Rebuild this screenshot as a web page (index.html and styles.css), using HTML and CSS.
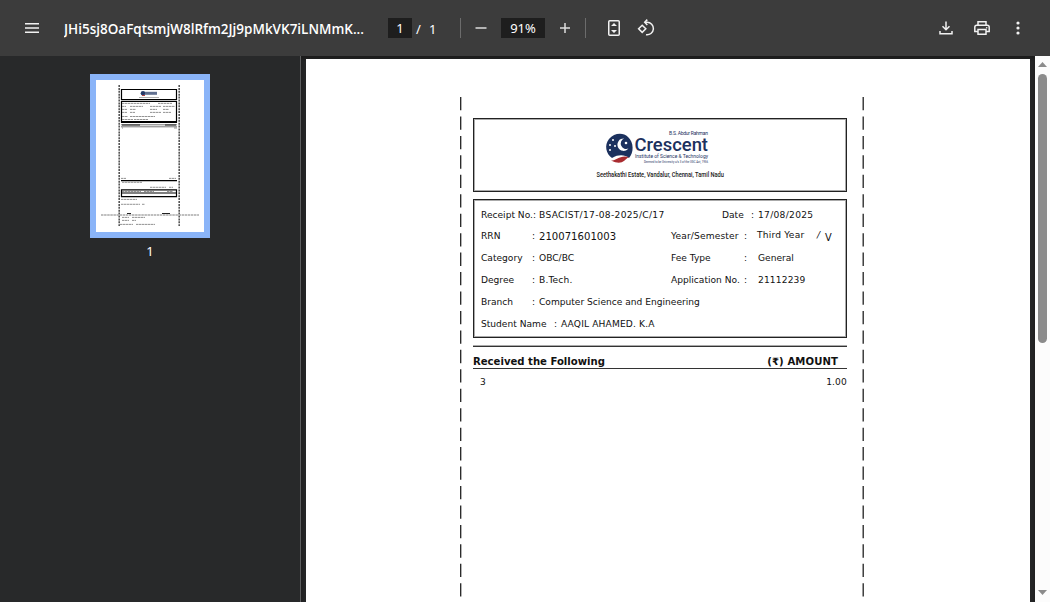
FILE: index.html
```html
<!DOCTYPE html>
<html lang="en">
<head>
<meta charset="utf-8">
<title>Fee receipt</title>
<link rel="stylesheet" href="styles.css">
</head>
<body>
<div class="viewer">
  <header class="toolbar">
    <svg class="menu" width="14" height="10" viewBox="0 0 14 10"><path d="M0 .8h14M0 5h14M0 9.2h14" stroke="#f1f1f1" stroke-width="1.6"/></svg>
    <div class="filename"><svg width="302" height="24"><text x="0" y="18" textLength="300" lengthAdjust="spacingAndGlyphs">JHi5sj8OaFqtsmjW8lRfm2Jj9pMkVK7iLNMmK...</text></svg></div>
    <span class="field page-field">1</span>
    <span class="slash">/</span><span class="total">1</span>
    <i class="divider"></i>
    <svg class="minus" width="12" height="12" viewBox="0 0 12 12"><path d="M.5 6h11" stroke="#ddd" stroke-width="1.5"/></svg>
    <span class="field zoom-field">91%</span>
    <svg class="plus" width="12" height="12" viewBox="0 0 12 12"><path d="M1 6h10M6 1v10" stroke="#ddd" stroke-width="1.5"/></svg>
    <i class="divider second"></i>
    <svg class="fit" width="12" height="16" viewBox="0 0 12 16"><rect x=".75" y=".75" width="10.5" height="14.5" rx="1" fill="none" stroke="#f1f1f1" stroke-width="1.5"/><path d="M3 6l3-3 3 3zM3 10l3 3 3-3z" fill="#f1f1f1"/></svg>
    <svg class="rotate" width="18" height="18" viewBox="0 0 18 18"><g fill="none" stroke="#f1f1f1" stroke-width="1.5"><path d="M5.2 6.2l3.6 3.6-3.6 3.6-3.6-3.6z"/><path d="M8 3.2h2a6.3 6.3 0 1 1-1 12.5"/><path d="M10.3.6L7.7 3.2l2.6 2.7"/></g></svg>
    <div class="actions">
      <svg width="14" height="14" viewBox="0 0 14 14"><path d="M7 .5v8M3.5 5.2L7 8.7l3.5-3.5M1 10v2.8h12V10" fill="none" stroke="#f1f1f1" stroke-width="1.5"/></svg>
      <svg width="16" height="14" viewBox="0 0 16 14"><g fill="none" stroke="#f1f1f1" stroke-width="1.5"><path d="M4 4V.8h8V4M4 10.5H.8V6.2q0-2 2-2h10.4q2 0 2 2v4.3H12"/><path d="M4 8.5h8v4.7H4z"/></g><circle cx="12.7" cy="6.7" r=".8" fill="#f1f1f1"/></svg>
      <svg class="dots" width="4" height="14" viewBox="0 0 4 14" fill="#f1f1f1"><circle cx="2" cy="2" r="1.6"/><circle cx="2" cy="7" r="1.6"/><circle cx="2" cy="12" r="1.6"/></svg>
    </div>
  </header>
  <main class="body">
    <aside class="sidebar">
      <div class="thumb">
        <svg width="108" height="152" viewBox="0 0 108 152">
          <g fill="none" stroke="#555" stroke-width="1.6" stroke-dasharray="2 .9"><path d="M23.2 5v141M83.2 5v141"/></g>
          <path d="M5 135h98" stroke="#aaa" stroke-width="1.3" stroke-dasharray="2.5 .6"/>
          <g fill="none" stroke="#000" stroke-width="1.2"><path d="M25.5 9.5h55v10.2h-55zM25.5 21.5h55V42h-55zM25.5 109.8h55v6.9h-55zM25 113h56M25 100.7h56"/></g>
          <path d="M25 42h56" stroke="#000" stroke-width="1.8"/>
          <path d="M25 44.8h56M25 46.8h56" stroke="#777" stroke-width="1"/>
          <circle cx="47" cy="13.2" r="2.3" fill="#233a69"/><path d="M46 15.5h3" stroke="#b44"/>
          <path d="M49 13.3h12" stroke="#617090" stroke-width="3"/><path d="M43 17.5h20" stroke="#999" stroke-width=".8"/>
          <g stroke="#777" stroke-width=".8" stroke-dasharray="2.5 .5">
            <path d="M26 23.4h28M62 23.4h14M26 26.4h4M34 26.4h13M54 26.4h11M67 26.4h12M26 29.4h5M34 29.4h6M54 29.4h7M67 29.4h6M26 32.4h5M34 32.4h5M54 32.4h11M67 32.4h8M26 36.5h6M34 36.5h25M26 39.5h11M38 39.5h14"/>
            <path d="M25 98.4h5M73 98.4h7M26 102.3h20M54 107.3h16M73 107.3h4M26 111.5h19M48 111.5h10M71 111.5h6M25 119.4h16M25 124.3h19M46 124.3h3M26 137.4h7M36 137.4h13M26 140.4h7M36 140.4h4M24 144.4h13M40 144.4h19"/>
          </g>
          <path d="M26 45h18M69 45h11M31 133.5h4M66 133.5h8" stroke="#222" stroke-width="1"/><path d="M26 48h1M78 48h3" stroke="#777" stroke-width=".8"/>
        </svg>
      </div>
      <div class="thumb-number">1</div>
    </aside>
    <section class="document">
      <article class="page">
        <div class="receipt">
          <svg class="rule-left" width="2" height="501"><path d="M.7 0v501" stroke="#222" stroke-width="1.3" stroke-dasharray="13.3 6.15"/></svg>
          <div class="content">
            <div class="letterhead">
              <svg width="140" height="60" viewBox="0 0 140 60">
                <path d="M20 28c-6-4-8-13-3-19 5-6 14-7 19-2 6 5 6 16 1 21-4-3-10-4-17 0z" fill="#1c315e"/>
                <path d="M19 30.500c6 0 9-6 18-3.500-5 3-7 9-18 3.500z" fill="#a92c30"/>
                <path d="M32 8.500a6.200 6.200 0 1 0 4.500 10 5.200 5.200 0 1 1-4.500-10z" fill="#fff"/>
                <g fill="#fff"><circle cx="21" cy="10" r="1"/><circle cx="18" cy="15" r="1"/><circle cx="23" cy="16" r="1"/><circle cx="18" cy="20" r="1"/><circle cx="34" cy="13" r="1.3"/></g>
                <g class="brand">
                  <text x="77" y="5" font-size="5" textLength="39">B.S. Abdur Rahman</text>
                  <text x="42.5" y="20.5" font-size="18.5" class="name" textLength="73.5" lengthAdjust="spacingAndGlyphs">Crescent</text>
                  <text x="43" y="27.7" font-size="5.6" textLength="73" lengthAdjust="spacingAndGlyphs">Institute of Science &amp; Technology</text>
                  <text x="52" y="32.7" font-size="3.4" textLength="64" lengthAdjust="spacingAndGlyphs">Deemed to be University u/s 3 of the UGC Act, 1956</text>
                </g>
                <text class="address" x="4.5" y="46.5" textLength="127.500" lengthAdjust="spacingAndGlyphs">Seethakathi Estate, Vandalur, Chennai, Tamil Nadu</text>
              </svg>
            </div>
            <div class="details">
              <div class="row"><span class="label">Receipt No.:</span><span class="value wide">BSACIST/17-08-2025/C/17</span><span class="date-label">Date</span><span class="colon">:</span><span class="date">17/08/2025</span></div>
              <div class="row"><span class="label">RRN</span><span class="colon">:</span><span class="value rrn">210071601003</span><span class="label2 spaced">Year/Semester</span><span class="colon2">:</span><span class="year">Third Year</span><i class="sem-slash">/</i><span class="sem">V</span></div>
              <div class="row"><span class="label">Category</span><span class="colon">:</span><span class="value">OBC/BC</span><span class="label2">Fee Type</span><span class="colon2">:</span><span>General</span></div>
              <div class="row"><span class="label">Degree</span><span class="colon">:</span><span class="value spaced">B.Tech.</span><span class="label2">Application No.</span><span class="colon2">:</span><span class="spaced">21112239</span></div>
              <div class="row"><span class="label">Branch</span><span class="colon">:</span><span>Computer Science and Engineering</span></div>
              <div class="row"><span class="student">Student Name</span><span class="colon">:</span><span class="student-name">AAQIL AHAMED. K.A</span></div>
            </div>
            <div class="amount-head"><span>Received the Following</span><span class="amount">(₹) AMOUNT</span></div>
            <div class="amount-row"><span>3</span><span class="spaced">1.00</span></div>
          </div>
          <svg class="rule-right" width="2" height="501"><path d="M1.2 0v501" stroke="#222" stroke-width="1.3" stroke-dasharray="13.3 6.15"/></svg>
        </div>
      </article>
    </section>
    <div class="scrollbar">
      <svg width="9" height="5" viewBox="0 0 9 5"><path d="M0 5l4.5-5L9 5z" fill="#8b8b8b"/></svg>
      <i class="handle"></i>
      <svg class="down" width="9" height="5" viewBox="0 0 9 5"><path d="M0 0h9L4.5 5z" fill="#8b8b8b"/></svg>
    </div>
  </main>
</div>
</body>
</html>
```
FILE: styles.css
```css
* { box-sizing: border-box; }
body { margin: 0; overflow: hidden; background: #28292a; }
svg { display: block; flex: none; }
.viewer { width: 1050px; height: 602px; display: flex; flex-direction: column; overflow: hidden; }
.toolbar { height: 56px; flex: none; background: #3c3c3c; color: #fff; display: flex; align-items: center; padding-left: 25px; font: 13px "Noto Sans", sans-serif; }
.filename { margin-left: 25px; width: 324px; }
.filename text { font: 600 13.5px "Open Sans", sans-serif; fill: #fff; }
.field { background: #1e1e1e; height: 20px; line-height: 21px; text-align: center; }
.page-field { width: 24px; }
.slash { width: 13px; padding: 1px 0 0 4px; }
.total { width: 8px; margin-left: 4px; padding-top: 1px; }
.divider { width: 1px; height: 20px; background: #6c6c6c; margin-left: 23px; }
.minus { margin-left: 14px; }
.zoom-field { width: 44px; margin-left: 14px; }
.plus { margin-left: 14px; }
.second { margin-left: 14px; }
.fit { margin-left: 22px; }
.rotate { margin-left: 17px; }
.actions { display: flex; align-items: center; margin: 0 30px 0 auto; gap: 21px; }
.dots { margin-left: 5px; }
.body { flex: 1; display: flex; min-height: 0; }
.sidebar { width: 301px; flex: none; background: #28292a; border-right: 1px solid #5d5e5f; padding-top: 18px; display: flex; flex-direction: column; align-items: center; }
.thumb { border: 6px solid #8ab4f8; background: #fff; width: 120px; height: 164px; flex: none; }
.thumb-number { color: #fff; font: 13px/18px "Noto Sans", sans-serif; margin-top: 4px; }
.document { flex: 1; background: #242526; padding: 3px 5px 0; overflow: hidden; box-shadow: inset 0 3px 3px #1c1c1c; }
.page { background: #fff; width: 724px; height: 600px; padding: 38px 0 0 154px; }
.receipt { width: 404px; display: flex; }
.content { width: 374px; margin: 21px 15px 0 11px; flex: none; font: 9.1px "DejaVu Sans", sans-serif; color: #111; }
.letterhead { height: 74px; border: 1px solid #222; box-shadow: inset 1px 1px #aaa, inset -1px -1px #aaa; display: flex; justify-content: center; padding: 11px 0 0 4px; }
.brand { font-family: Roboto, sans-serif; fill: #1c315e; }
.name { font-weight: 500; }
.address { font: 500 6.6px Roboto, sans-serif; fill: #222; }
.details { margin-top: 7px; height: 139px; border: 1px solid #222; box-shadow: inset 1px 1px #aaa, inset -1px -1px #aaa; padding: 4.6px 0 0 7px; }
.row { display: flex; height: 21.8px; line-height: 21px; white-space: nowrap; }
.label { width: 51px; }
.row .wide { width: 183px; letter-spacing: .31px; }
.row:first-child .label { width: 58px; }
.date-label { width: 29px; }
.date { letter-spacing: .3px; }
.colon { width: 7px; }
.value { width: 132px; }
.spaced { letter-spacing: .15px; }
.rrn { font-size: 10.1px; }
.label2 { width: 73px; }
.colon2 { width: 14px; }
.year { margin: -1px 0 0 -1px; width: 60px; letter-spacing: .2px; }
.sem-slash { width: 8px; margin-top: -1px; }
.sem { margin-top: 1px; font-size: 9.8px; }
.student { width: 73px; }
.student-name { letter-spacing: .15px; }
.amount-head { display: flex; justify-content: space-between; margin-top: 8px; height: 23px; border-top: 1px solid #333; border-bottom: 1px solid #333; box-shadow: 0 -1px #aaa, 0 -1px #aaa; font-weight: bold; font-size: 10.1px; line-height: 29px; }
.amount { padding-right: 9px; letter-spacing: .1px; }
.amount-row { display: flex; justify-content: space-between; padding-left: 7px; line-height: 26px; }
.scrollbar { width: 15px; flex: none; background: #fcfcfc; display: flex; flex-direction: column; align-items: center; padding-top: 6px; }
.handle { width: 9px; height: 269px; margin-top: 7px; border-radius: 5px; background: #8b8b8b; }
.down { margin: auto 0 7px; }
```
